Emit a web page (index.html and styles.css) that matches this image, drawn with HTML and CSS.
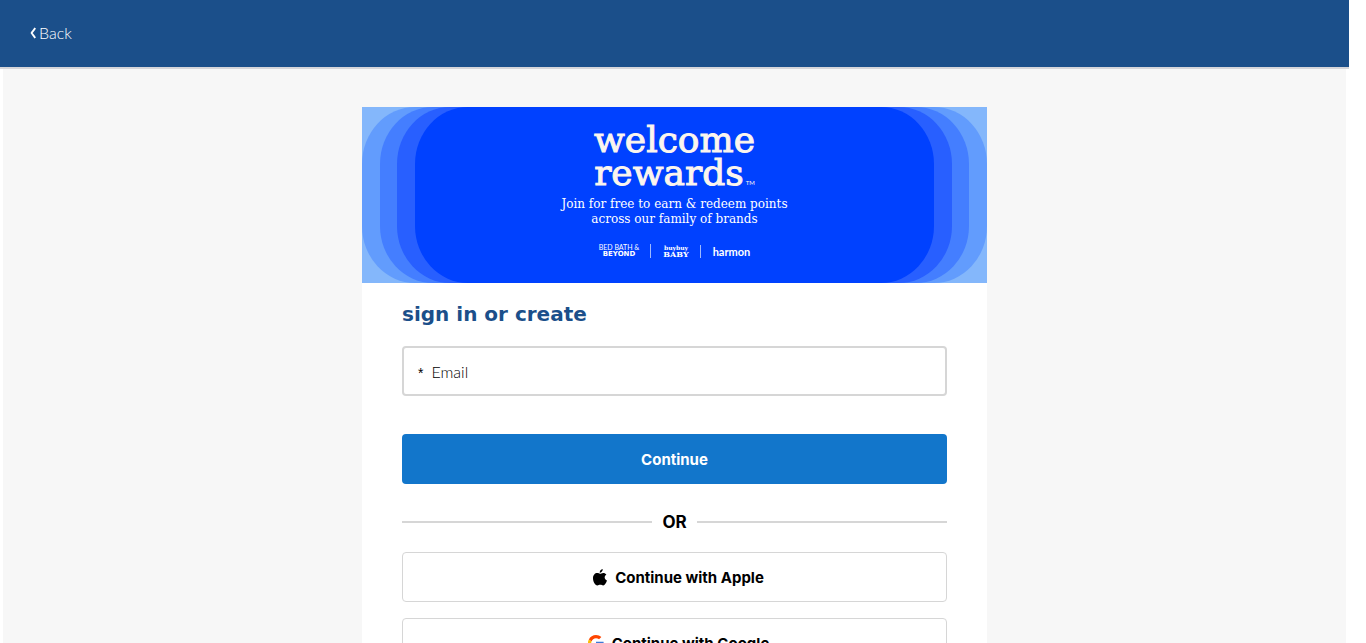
FILE: index.html
```html
<!DOCTYPE html>
<html lang="en">
<head>
<meta charset="utf-8">
<meta name="viewport" content="width=device-width, initial-scale=1">
<title>Sign in or create</title>
<link rel="stylesheet" href="styles.css">
</head>
<body>
<header class="topbar">
  <a class="back" href="#"><svg class="back-icon" viewBox="0 0 6 12" aria-hidden="true"><path d="M5.200 1C4 3 2.600 4.500 1.600 6c1 1.500 2.400 3 3.600 5" fill="none" stroke="currentColor" stroke-width="1.800"/></svg>Back</a>
</header>
<main class="page">
  <section class="card">
    <div class="banner">
      <svg class="banner-art" viewBox="0 0 625 176" preserveAspectRatio="none" aria-hidden="true">
        <rect width="625" height="176" fill="#84b7fb"/>
        <rect width="625" height="176" rx="53" ry="57" fill="#629cfd"/>
        <rect x="18" width="589" height="176" rx="53" ry="57" fill="#447eff"/>
        <rect x="35" width="555" height="176" rx="53" ry="57" fill="#285fff"/>
        <rect x="53" width="519" height="176" rx="53" ry="57" fill="#0041ff"/>
      </svg>
      <div class="banner-copy">
        <p class="wordmark"><span>welcome</span><span>rewards<span class="tm">TM</span></span></p>
        <p class="pitch">Join for free to earn &amp; redeem points<br>across our family of brands</p>
        <div class="brands">
          <span class="brand bedbath"><span>BED BATH &amp;</span><b>BEYOND</b></span>
          <span class="brand baby"><span>buybuy</span><b>BABY</b></span>
          <span class="brand harmon">harmon</span>
        </div>
      </div>
    </div>
    <form class="form">
      <h1 class="title">sign in or create</h1>
      <div class="field">
        <label class="field-label" for="email"><span class="required">*</span>Email</label>
        <input class="field-input" id="email" type="email" required>
      </div>
      <button class="button primary" type="submit">Continue</button>
      <div class="divider">OR</div>
      <button class="button social" type="button">
        <svg class="apple" viewBox="0 0 14 17" aria-hidden="true"><path d="M9.700 0c.2 1.900-1.300 3.700-3 3.700C6.500 2 8 .3 9.700 0zM7 4.700c.8 0 1.800-.8 3.200-.8 1.300 0 2.500.7 3.200 1.700-2.500 1.500-2.200 5 .6 6-.8 2.200-2.200 4.900-3.800 4.900-1.200 0-1.500-.7-2.900-.7s-1.800.7-2.900.7C2 16.500 0 12.600 0 9.300c0-3.300 2-5.300 4.100-5.300 1.300 0 2.200.7 2.900.7z"/></svg>
        Continue with Apple
      </button>
      <button class="button social" type="button">
        <svg class="google" viewBox="0 0 48 48" aria-hidden="true"><path fill="#ff4500" d="M24 9.500c3.500 0 6.700 1.200 9.200 3.600l6.900-6.900C35.900 2.400 30.500 0 24 0 14.600 0 6.500 5.400 2.600 13.200l8 6.200C12.400 13.700 17.700 9.500 24 9.500z"/><path fill="#3b78d8" d="M47 24.600c0-1.600-.2-3.100-.4-4.600H24v9h12.900c-.6 3-2.300 5.500-4.800 7.200l7.700 6C44.400 38 47 31.800 47 24.600z"/><path fill="#fbbc05" d="M10.500 28.600a14.500 14.500 0 0 1 0-9.200l-8-6.200a24 24 0 0 0 0 21.600z"/><path fill="#34a853" d="M24 48c6.500 0 11.900-2.100 15.800-5.800l-7.700-6c-2.100 1.500-4.900 2.300-8.100 2.300-6.300 0-11.600-4.200-13.500-9.900l-8 6.200C6.500 42.600 14.600 48 24 48z"/></svg>
        Continue with Google
      </button>
    </form>
  </section>
</main>
</body>
</html>
```
FILE: styles.css
```css
* { box-sizing: border-box; }

body {
  margin: 0;
  height: 100vh;
  overflow-y: auto;
  scrollbar-width: none;
  padding-right: 17px;
  background: #fff;
  color: #000;
  font-family: Lato, "Liberation Sans", sans-serif;
}

.topbar {
  display: flex;
  align-items: center;
  padding: 21px 30px 22px;
  background: #1b4f8a;
  border-bottom: 2px solid #d6d6da;
}

.back {
  display: flex;
  align-items: center;
  gap: 3px;
  color: #fff;
  font-size: 16px;
  font-weight: 300;
  line-height: 24px;
  text-decoration: none;
}

.back-icon { width: 6px; height: 12px; }

.page {
  margin: 0 3px;
  padding: 38px 0;
  background: #f7f7f7;
}

.card {
  max-width: 625px;
  margin: 0 auto;
  background: #fff;
}

.banner { display: grid; }

.banner-art,
.banner-copy { grid-area: 1 / 1; }

.banner-art {
  width: 100%;
  height: 100%;
  min-height: 0;
  contain: size;
}

.banner-copy {
  z-index: 1;
  display: flex;
  flex-direction: column;
  align-items: center;
  padding: 16px 0 24px;
  color: #fff;
  font-family: "DejaVu Serif", serif;
  text-align: center;
}

.wordmark {
  display: flex;
  flex-direction: column;
  align-items: center;
  margin: 0;
  color: #fbf5ee;
  font-size: 36px;
  line-height: 33px;
  -webkit-text-stroke: 1px #fbf5ee;
}

.wordmark > span { height: 33px; }

.tm {
  margin-left: 2px;
  font-family: Lato, sans-serif;
  font-size: 6px;
  line-height: 6px;
  -webkit-text-stroke: 0;
}

.pitch {
  margin: 8px 0 16px;
  font-size: 12px;
  line-height: 15px;
}

.brands {
  display: flex;
  align-items: center;
  height: 16px;
}

.brand {
  display: flex;
  flex-direction: column;
  align-items: center;
  line-height: 7px;
}

.brand + .brand {
  margin-left: 11px;
  padding-left: 12px;
  border-left: 1px solid #9db9ff;
}

.bedbath {
  font-family: Lato, sans-serif;
  font-size: 7px;
}

.bedbath b {
  font-family: "DejaVu Sans", sans-serif;
  font-weight: 700;
}

.baby {
  font-size: 6px;
  font-weight: 700;
}

.baby b { font-size: 8px; }

.brand.harmon {
  font-family: Lato, sans-serif;
  font-size: 11px;
  font-weight: 700;
  line-height: 13px;
}

.form {
  display: flex;
  flex-direction: column;
  padding: 19px 40px 40px;
}

.title {
  margin: 0 0 20px;
  color: #1b4f8a;
  font-family: "DejaVu Sans", sans-serif;
  font-size: 20px;
  font-weight: 700;
  line-height: 24px;
}

.field {
  display: flex;
  align-items: center;
  height: 50px;
  margin-bottom: 38px;
  padding: 0 14px;
  border: 2px solid #d6d6d6;
  border-radius: 4px;
}

.field-label {
  display: flex;
  align-items: center;
  gap: 8px;
  font-size: 16px;
  font-weight: 300;
}

.required {
  padding-top: 4px;
  font-family: "Liberation Sans", sans-serif;
  font-size: 14px;
  font-weight: 400;
}

.field-input {
  flex: 1;
  min-width: 0;
  height: 100%;
  border: 0;
  outline: 0;
  background: transparent;
  font: inherit;
}

.button {
  display: flex;
  align-items: center;
  justify-content: center;
  gap: 8px;
  height: 50px;
  border-radius: 4px;
  font-family: Inter, sans-serif;
  font-size: 15px;
  font-weight: 700;
  cursor: pointer;
}

.primary {
  border: 0;
  background: #1276cb;
  color: #fff;
}

.social {
  margin-bottom: 16px;
  padding: 0 0 0 8px;
  border: 1px solid #d6d6d6;
  background: #fff;
  color: #000;
}

.divider {
  display: flex;
  align-items: center;
  gap: 10px;
  margin: 26px 0 18px;
  font-family: Inter, sans-serif;
  font-size: 17px;
  font-weight: 700;
  line-height: 24px;
}

.divider::before,
.divider::after {
  content: "";
  flex: 1;
  height: 2px;
  background: #d6d6d6;
}

.apple { width: 14px; height: 17px; }

.google { width: 16px; height: 16px; }
```
